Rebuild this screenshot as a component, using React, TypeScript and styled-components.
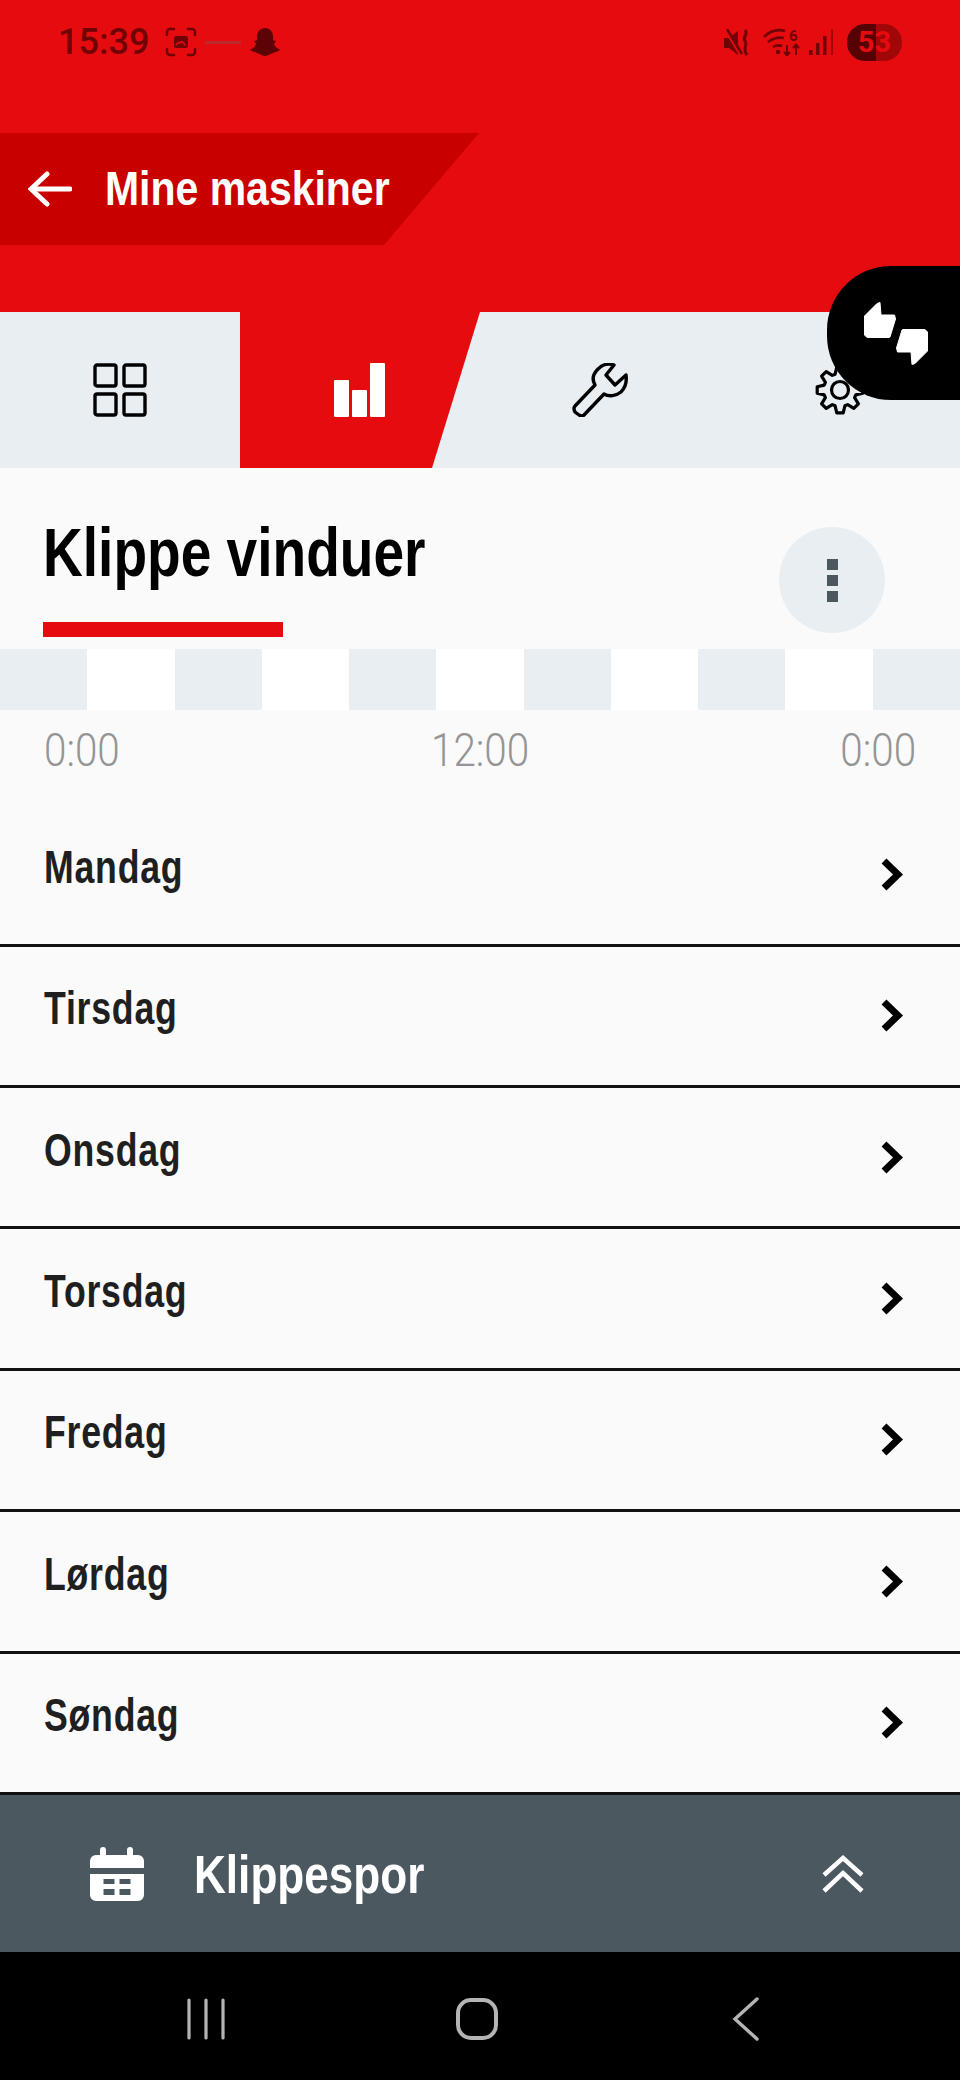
import React, { FC } from 'react';
import styled, { createGlobalStyle, css } from 'styled-components';

const RED = '#e60b0e';
const SLATE = '#4c5860';
const PALE = '#e8eef1';
const STATUS = '#6f0306';
const DAYS = ['Mandag', 'Tirsdag', 'Onsdag', 'Torsdag', 'Fredag', 'Lørdag', 'Søndag'];

// no condensed face is installed, so the bold sans gets squeezed sideways
const condensed = (x: number) => css`
  display: inline-block;
  white-space: nowrap;
  transform: scaleX(${x});
  transform-origin: left center;
`;

const GlobalStyle = createGlobalStyle`
  html, body {
    margin: 0;
    padding: 0;
    background: #fafafa;
  }
  * {
    box-sizing: border-box;
  }
`;

const Screen = styled.div`
  position: relative;
  width: 960px;
  height: 2080px;
  display: flex;
  flex-direction: column;
  overflow: hidden;
  background: #fafafa;
  font-family: "Liberation Sans", sans-serif;
`;

const Header = styled.header`
  height: 312px;
  flex: none;
  background: ${RED};
  padding-top: 133px;
`;

const StatusBar = styled.div`
  position: absolute;
  top: 22px;
  left: 58px;
  right: 58px;
  height: 40px;
  display: flex;
  align-items: center;
  justify-content: space-between;
  color: ${STATUS};
`;

const StatusGroup = styled.div<{ $gap: number }>`
  display: flex;
  align-items: center;
  gap: ${p => p.$gap}px;
`;

const Clock = styled.span`
  font-family: "Roboto", sans-serif;
  font-weight: 500;
  font-size: 36px;
  margin-right: 8px;
`;

const StatusDash = styled.span`
  width: 36px;
  height: 3px;
  background: #bd2a2d;
`;

const MuteSlot = styled.span`
  display: flex;
  margin-right: 5px;
`;

const Battery = styled.div`
  width: 55px;
  height: 37px;
  margin-left: 6px;
  border-radius: 18px;
  display: flex;
  align-items: center;
  justify-content: center;
  background: linear-gradient(90deg, #560205 0 53%, #a10609 53% 100%);
  color: ${RED};
  font-family: "Roboto", sans-serif;
  font-weight: 700;
  font-size: 29px;
`;

const BackBanner = styled.div`
  width: 479px;
  height: 112px;
  display: flex;
  align-items: center;
  gap: 33px;
  padding-left: 28px;
  background: #c90000;
  clip-path: polygon(0 0, 100% 0, 384px 100%, 0 100%);
`;

const BackTitle = styled.span`
  ${condensed(0.836)}
  margin-bottom: 2px;
  color: #fff;
  font-size: 49px;
  font-weight: 700;
`;

const TabBar = styled.nav`
  height: 156px;
  flex: none;
  display: grid;
  grid-template-columns: repeat(4, 240px);
  background: ${PALE};
`;

const Tab = styled.div<{ $active?: boolean }>`
  display: flex;
  align-items: center;
  justify-content: center;
  background: ${p => (p.$active ? RED : 'transparent')};
  clip-path: ${p => (p.$active ? 'polygon(0 0, 100% 0, 192px 100%, 0 100%)' : 'none')};
`;

const FeedbackTab = styled.div`
  position: absolute;
  top: 266px;
  right: 0;
  width: 133px;
  height: 134px;
  padding-left: 5px;
  display: flex;
  align-items: center;
  justify-content: center;
  background: #000;
  border-radius: 64px 0 0 64px;
`;

const Main = styled.main`
  flex: 1;
  display: flex;
  flex-direction: column;
`;

const TitleRow = styled.div`
  height: 181px;
  flex: none;
  padding: 46px 75px 0 43px;
  display: flex;
  justify-content: space-between;
  align-items: flex-start;
`;

const TitleBlock = styled.div`
  display: flex;
  flex-direction: column;
`;

const Title = styled.h1`
  ${condensed(0.81)}
  margin: 0;
  color: #000;
  font-size: 68px;
  line-height: 76px;
  font-weight: 700;
`;

const TitleRule = styled.div`
  width: 240px;
  height: 15px;
  margin-top: 32px;
  background: ${RED};
`;

const MoreButton = styled.div`
  width: 106px;
  height: 106px;
  margin-top: 13px;
  border-radius: 50%;
  background: ${PALE};
  display: flex;
  flex-direction: column;
  align-items: center;
  justify-content: center;
  gap: 5px;
`;

const MoreDot = styled.span`
  width: 11px;
  height: 11px;
  background: ${SLATE};
`;

const Timeline = styled.div`
  height: 61px;
  flex: none;
  display: grid;
  grid-template-columns: repeat(11, 1fr);
`;

const Slot = styled.div<{ $odd: boolean }>`
  background: ${p => (p.$odd ? '#fff' : PALE)};
`;

const TimeLabels = styled.div`
  height: 95.2px;
  flex: none;
  padding: 13px 44px 0 44px;
  display: flex;
  justify-content: space-between;
  align-items: flex-start;
  color: #959595;
  font-family: "Roboto", sans-serif;
  font-weight: 300;
  font-size: 47px;
  line-height: 54px;
`;

const TimeLabel = styled.span<{ $origin: string }>`
  ${condensed(0.86)}
  transform-origin: ${p => p.$origin} center;
`;

const DayList = styled.div`
  flex: 1;
  display: flex;
  flex-direction: column;
`;

const DayRow = styled.div`
  height: 141.4px;
  flex: none;
  padding: 0 57px 0 44px;
  display: flex;
  align-items: center;
  justify-content: space-between;
  border-bottom: 3px solid #111;
`;

const DayLabel = styled.span`
  ${condensed(0.775)}
  margin-bottom: 15px;
  color: #1f1f1f;
  font-size: 46px;
  font-weight: 700;
  letter-spacing: 1px;
`;

const Drawer = styled.div`
  height: 157px;
  flex: none;
  display: flex;
  align-items: center;
  padding: 0 96px 0 90px;
  background: ${SLATE};
  color: #fff;
`;

const DrawerTitle = styled.span`
  flex: 1;
  margin-left: 50px;
  font-size: 54px;
  font-weight: 700;

  & > span {
    ${condensed(0.817)}
  }
`;

const SystemNav = styled.div`
  height: 128px;
  flex: none;
  display: grid;
  grid-template-columns: 269px 277px 1fr;
  padding: 6px 0 0 186px;
  align-items: center;
  background: #000;
`;

const ArrowLeft = () => (
  <svg width="44" height="36" viewBox="0 0 44 36" fill="none" stroke="#fff" strokeWidth="5" strokeLinecap="round">
    <path d="M42 18H4" />
    <path d="M19 3 3 18l16 15" />
  </svg>
);

const ScreenshotIcon = () => (
  <svg width="32" height="30" viewBox="0 0 32 30" fill="none" stroke={STATUS} strokeWidth="2.5" strokeLinecap="round">
    <path d="M2 8V5a3 3 0 0 1 3-3h4M23 2h4a3 3 0 0 1 3 3v3M30 22v3a3 3 0 0 1-3 3h-4M9 28H5a3 3 0 0 1-3-3v-3" />
    <rect x="9" y="9" width="14" height="12" rx="2.5" fill={STATUS} stroke="none" />
    <path d="M11 18c2-3 3-3 4-2 1-2 3-2 5 2" stroke={RED} strokeWidth="1.5" />
  </svg>
);

const SnapIcon = () => (
  <svg width="32" height="30" viewBox="0 0 32 32" fill="#5d0205" preserveAspectRatio="none">
    <path d="M16 1c5 0 8 4 8 9v4l3 1-2 3c1 3 3 5 6 6-2 3-5 2-7 4-3 0-5 3-8 3s-5-3-8-3c-2-2-5-1-7-4 3-1 5-3 6-6l-2-3 3-1v-4c0-5 3-9 8-9Z" />
  </svg>
);

const MuteIcon = () => (
  <svg width="27" height="27" viewBox="0 0 27 27" fill={STATUS}>
    <path d="M0 9h5l9-7v24l-9-7H0Z" />
    <path d="M1 1l15 25" stroke={RED} strokeWidth="2" />
    <path d="M3 0l15 25" stroke={STATUS} strokeWidth="2.500" />
    <path d="M21 1c4 4-3 7 0 11s-3 8 2 14" fill="none" stroke={STATUS} strokeWidth="3" />
  </svg>
);

const WifiIcon = () => (
  <svg width="39" height="28" viewBox="0 0 39 28" fill="none" stroke={STATUS} strokeWidth="2.600">
    <path d="M1 9c6-6 14-8 21-6M5 14c5-4 11-5 16-4M10 19c3-2 6-2 9-1" />
    <circle cx="15" cy="24" r="2.200" fill={STATUS} stroke="none" />
    <path d="M24 17v10m-3-3 3 3.500 3-3.500M33 27V17m-3 3 3-3.500 3 3.500" strokeWidth="2" />
    <text x="26" y="13" fontFamily="Roboto, sans-serif" fontWeight="700" fontSize="15" fill={STATUS} stroke="none">6</text>
  </svg>
);

const SignalIcon = () => (
  <svg width="25" height="28" viewBox="0 0 25 28" fill={STATUS}>
    <rect x="0" y="22" width="3.500" height="5" />
    <rect x="7" y="15" width="3.500" height="12" />
    <rect x="14" y="8" width="3.500" height="19" />
    <rect x="22" y="1" width="2" height="26" fill="#a10609" />
  </svg>
);

const GridIcon = () => (
  <svg width="54" height="54" viewBox="0 0 54 54" fill="none" stroke="#000" strokeWidth="3.400">
    <rect x="2" y="2" width="21" height="21" rx="2" />
    <rect x="31" y="2" width="21" height="21" rx="2" />
    <rect x="2" y="31" width="21" height="21" rx="2" />
    <rect x="31" y="31" width="21" height="21" rx="2" />
  </svg>
);

const BarsIcon = () => (
  <svg width="52" height="54" viewBox="0 0 52 54" fill="#fff">
    <rect x="0" y="17" width="15" height="37" rx="1" />
    <rect x="18" y="27" width="15" height="27" rx="1" />
    <rect x="36" y="0" width="15" height="54" rx="1" />
  </svg>
);

const WrenchIcon = () => (
  <svg width="56" height="54" viewBox="0 0 56 54" fill="none" stroke="#000" strokeWidth="3.400" strokeLinejoin="round">
    <path d="M42 2C36 0 30 2 26 6c-5 5-6 11-3 16L3 43c-2 2-1 4 0 6l4 3c2 1 4 1 5 0l20-21c5 3 12 2 17-2 4-4 6-10 5-17L43 22l-9-10Z" />
  </svg>
);

// eight blunt teeth, easier to generate than to write out
const gearPath = () => {
  const cx = 25;
  const cy = 25;
  const pts: string[] = [];
  for (let i = 0; i < 8; i++) {
    const a = (i * Math.PI) / 4;
    const at = (r: number, o: number) =>
      `${(cx + r * Math.cos(a + o)).toFixed(1)} ${(cy + r * Math.sin(a + o)).toFixed(1)}`;
    pts.push(at(16.5, -0.3), at(23, -0.14), at(23, 0.14), at(16.5, 0.3));
  }
  return `M${pts.join('L')}Z`;
};

const GearIcon = () => (
  <svg width="50" height="50" viewBox="0 0 50 50" fill="none" stroke="#000" strokeWidth="3.200" strokeLinejoin="round">
    <path d={gearPath()} />
    <circle cx="25" cy="25" r="8.500" />
  </svg>
);

const ThumbsIcon = () => (
  <svg width="64" height="63" viewBox="0 0 64 63" fill="#fff" stroke="#fff" strokeWidth="1" strokeLinejoin="round">
    <path d="M.5 14 13 1.500l3-1L17 13h13.500l1 4L26 35l-1 .5H3L.5 33Z" />
    <path d="M63.500 49 51 61.500l-3 1L47 50H33.500l-1-4L38 28l1-.5h22l2.500 2.500Z" />
  </svg>
);

const ChevronRight = () => (
  <svg width="22" height="33" viewBox="0 0 22 33" fill="none" stroke="#000" strokeWidth="7">
    <path d="M3 3l14 13.500L3 30" />
  </svg>
);

const CalendarIcon = () => (
  <svg width="54" height="54" viewBox="0 0 54 54" fill="#fff">
    <rect x="10" y="0" width="6" height="12" rx="3" />
    <rect x="37" y="0" width="6" height="12" rx="3" />
    <path d="M0 14a6 6 0 0 1 6-6h42a6 6 0 0 1 6 6v7H0Z" />
    <path fillRule="evenodd" d="M0 27h54v21a6 6 0 0 1-6 6H6a6 6 0 0 1-6-6ZM13.500 32v5h11v-5Zm16 0v5h11v-5ZM13.500 42v6h11v-6Zm16 0v6h11v-6Z" />
  </svg>
);

const DoubleUp = () => (
  <svg width="42" height="38" viewBox="0 0 42 38" fill="none" stroke="#fff" strokeWidth="4.500">
    <path d="M2 20 21 3l19 17" />
    <path d="M2 36 21 18l19 18" />
  </svg>
);

const NavRecents = () => (
  <svg width="40" height="42" viewBox="0 0 40 42" fill="none" stroke="#b4b4b4" strokeWidth="3.200" strokeLinecap="round">
    <path d="M3 2v38M20 2v38M37 2v38" />
  </svg>
);

const NavHome = () => (
  <svg width="44" height="44" viewBox="0 0 44 44" fill="none" stroke="#b4b4b4" strokeWidth="4">
    <rect x="3" y="3" width="38" height="38" rx="13" />
  </svg>
);

const NavBack = () => (
  <svg width="28" height="44" viewBox="0 0 28 44" fill="none" stroke="#b4b4b4" strokeWidth="3.400" strokeLinecap="round">
    <path d="M25 2 3 22l22 20" />
  </svg>
);

const App: FC = () => (
  <Screen>
    <GlobalStyle />
    <Header>
      <BackBanner>
        <ArrowLeft />
        <BackTitle>Mine maskiner</BackTitle>
      </BackBanner>
    </Header>
    <StatusBar>
      <StatusGroup $gap={8}>
        <Clock>15:39</Clock>
        <ScreenshotIcon />
        <StatusDash />
        <SnapIcon />
      </StatusGroup>
      <StatusGroup $gap={7}>
        <MuteSlot><MuteIcon /></MuteSlot>
        <WifiIcon />
        <SignalIcon />
        <Battery>53</Battery>
      </StatusGroup>
    </StatusBar>
    <TabBar>
      <Tab><GridIcon /></Tab>
      <Tab $active><BarsIcon /></Tab>
      <Tab><WrenchIcon /></Tab>
      <Tab><GearIcon /></Tab>
    </TabBar>
    <FeedbackTab><ThumbsIcon /></FeedbackTab>
    <Main>
      <TitleRow>
        <TitleBlock>
          <Title>Klippe vinduer</Title>
          <TitleRule />
        </TitleBlock>
        <MoreButton>
          <MoreDot />
          <MoreDot />
          <MoreDot />
        </MoreButton>
      </TitleRow>
      <Timeline>
        {Array.from({ length: 11 }, (_, i) => <Slot key={i} $odd={i % 2 === 1} />)}
      </Timeline>
      <TimeLabels>
        <TimeLabel $origin="left">0:00</TimeLabel>
        <TimeLabel $origin="center">12:00</TimeLabel>
        <TimeLabel $origin="right">0:00</TimeLabel>
      </TimeLabels>
      <DayList>
        {DAYS.map(day => (
          <DayRow key={day}>
            <DayLabel>{day}</DayLabel>
            <ChevronRight />
          </DayRow>
        ))}
      </DayList>
    </Main>
    <Drawer>
      <CalendarIcon />
      <DrawerTitle><span>Klippespor</span></DrawerTitle>
      <DoubleUp />
    </Drawer>
    <SystemNav>
      <NavRecents />
      <NavHome />
      <NavBack />
    </SystemNav>
  </Screen>
);

export default App;
